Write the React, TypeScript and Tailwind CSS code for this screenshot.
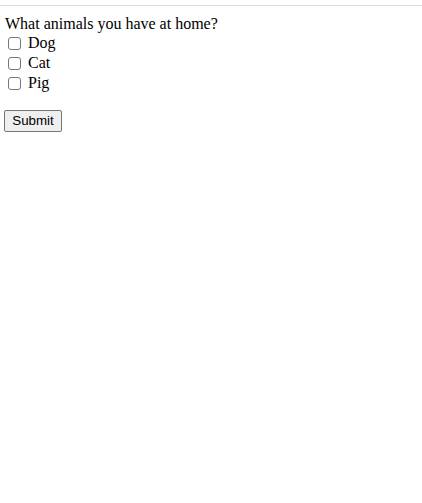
import { useState } from "react";

const ANIMALS = ["Dog", "Cat", "Pig"];

export default function App() {
  const [checked, setChecked] = useState<Record<string, boolean>>({});

  return (
    <div className="min-h-screen bg-white font-['Liberation_Serif',serif] text-[16px] text-black">
      <div className="h-[5px]" />
      <div className="h-px bg-[#dcdcdc]" />
      <form className="px-[4px] pt-[9px]" onSubmit={(e) => e.preventDefault()}>
        <p className="pl-px leading-[18px]">What animals you have at home?</p>
        {ANIMALS.map((name) => (
          <label key={name} className="flex h-[20px] items-center">
            <input
              type="checkbox"
              checked={!!checked[name]}
              onChange={(e) => setChecked({ ...checked, [name]: e.target.checked })}
              className="m-[3px_7px_3px_4px] size-[13px] shrink-0 appearance-none rounded-[3px] border border-[#767676] bg-white checked:border-[#0075ff] checked:bg-[#0075ff]"
            />
            <span className="leading-[18px]">{name}</span>
          </label>
        ))}
        <div className="h-[15px]" />
        <button
          type="submit"
          className="h-[22px] w-[58px] rounded-[2px] border border-[#767676] bg-[#efefef] font-['Liberation_Sans',Arial,sans-serif] text-[13.33px] leading-[18px] text-black"
        >
          Submit
        </button>
      </form>
    </div>
  );
}
